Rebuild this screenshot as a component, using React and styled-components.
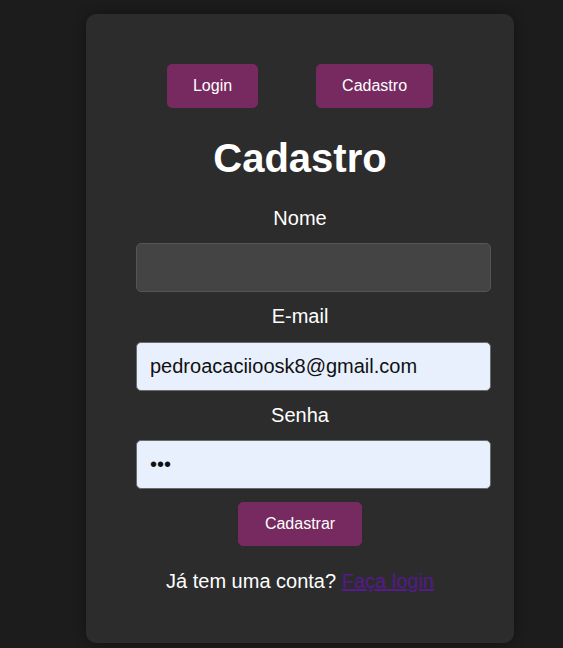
import React from 'react'
import styled, { createGlobalStyle } from 'styled-components'

const colors = {
  page: '#1c1c1c',
  card: '#2c2c2c',
  accent: '#772a5f',
  field: '#444444',
  fieldBorder: '#555555',
  autofill: '#e8f0fe',
  link: '#551a8b',
}

const GlobalStyle = createGlobalStyle`
  html, body {
    margin: 0;
    background: ${colors.page};
    font-family: 'Liberation Sans', Arial, sans-serif;
    color: #ffffff;
  }
`

export default function App() {
  return (
    <Page>
      <GlobalStyle />
      <Card>
        <TabRow>
          <TabButton type='button'>Login</TabButton>
          <TabButton type='button'>Cadastro</TabButton>
        </TabRow>

        <Title>Cadastro</Title>

        <Form onSubmit={e => e.preventDefault()}>
          <Label htmlFor='nome'>Nome</Label>
          <Input id='nome' type='text' defaultValue='' />

          <Label htmlFor='email'>E-mail</Label>
          <Input id='email' type='email' filled defaultValue='pedroacaciioosk8@gmail.com' />

          <Label htmlFor='senha'>Senha</Label>
          <Input id='senha' type='password' filled defaultValue='123' />

          <SubmitButton type='submit'>Cadastrar</SubmitButton>
        </Form>

        <Footer>
          Já tem uma conta? <FooterLink href='#login'>Faça login</FooterLink>
        </Footer>
      </Card>
    </Page>
  )
}

const Page = styled.div`
  min-height: 648px;
  padding: 14px 0 6px 86px;
  box-sizing: border-box;
`

const Card = styled.div`
  width: 328px;
  padding: 50px;
  background: ${colors.card};
  border-radius: 10px;
  box-shadow: 0 0 12px rgba(0, 0, 0, 0.35);
`

const TabRow = styled.div`
  display: flex;
  justify-content: center;
  gap: 58px;
`

const Button = styled.button`
  font-family: 'Liberation Sans', Arial, sans-serif;
  font-size: 16px;
  color: #ffffff;
  background: ${colors.accent};
  border: 1px solid ${colors.accent};
  border-radius: 5px;
  padding: 12px 25px;
  cursor: pointer;
`

const TabButton = styled(Button)``

const Title = styled.h2`
  margin: 28px 0 26px;
  font-size: 40px;
  font-weight: bold;
  text-align: center;
`

const Form = styled.form`
  display: flex;
  flex-direction: column;
  align-items: flex-start;
  gap: 13.2px;
`

const Label = styled.label`
  align-self: stretch;
  text-align: center;
  font-size: 20px;
`

const Input = styled.input`
  width: 100%;
  box-sizing: content-box;
  padding: 12px 12px 12px 13px;
  font-family: 'Liberation Sans', Arial, sans-serif;
  font-size: 20px;
  color: #111111;
  background: ${p => (p.filled ? colors.autofill : colors.field)};
  border: 1px solid ${p => (p.filled ? '#6b6b6b' : colors.fieldBorder)};
  border-radius: 5px;
  outline: none;
`

const SubmitButton = styled(Button)`
  align-self: center;
  padding: 12px 26px;
`

const Footer = styled.p`
  margin: 24px 0 0;
  text-align: center;
  font-size: 20px;
`

const FooterLink = styled.a`
  color: ${colors.link};
`
